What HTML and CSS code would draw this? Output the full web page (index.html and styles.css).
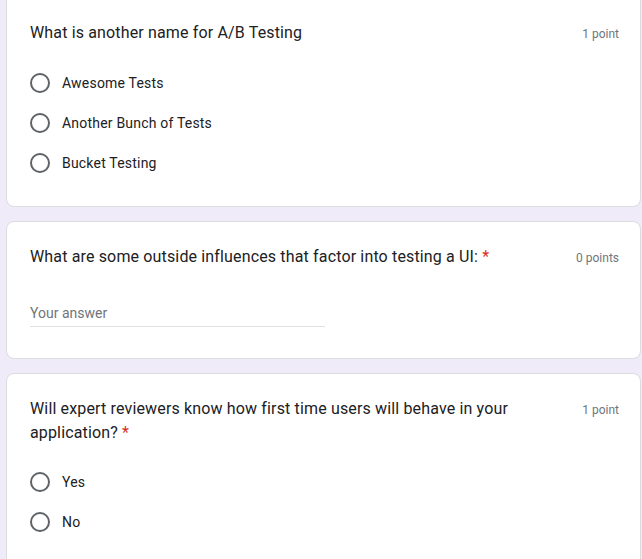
FILE: index.html
```html
<!DOCTYPE html>
<html lang="en">
<head>
<meta charset="utf-8">
<title>Quiz</title>
<link rel="stylesheet" href="styles.css">
</head>
<body>
<main class="stack">
  <section class="card card-first">
    <div class="head">
      <div class="title">What is another name for A/B Testing</div>
      <div class="points">1 point</div>
    </div>
    <div class="options">
      <label class="option"><span class="radio"></span><span class="label">Awesome Tests</span></label>
      <label class="option"><span class="radio"></span><span class="label">Another Bunch of Tests</span></label>
      <label class="option"><span class="radio"></span><span class="label">Bucket Testing</span></label>
    </div>
  </section>

  <section class="card">
    <div class="head">
      <div class="title">What are some outside influences that factor into testing a UI:&nbsp;<span class="req">*</span></div>
      <div class="points">0 points</div>
    </div>
    <div class="answer">Your answer</div>
  </section>

  <section class="card">
    <div class="head">
      <div class="title">Will expert reviewers know how first time users will behave in your application?&nbsp;<span class="req">*</span></div>
      <div class="points">1 point</div>
    </div>
    <div class="options">
      <label class="option"><span class="radio"></span><span class="label">Yes</span></label>
      <label class="option"><span class="radio"></span><span class="label">No</span></label>
    </div>
  </section>
</main>
</body>
</html>
```

FILE: styles.css
```css
* { box-sizing: border-box; }
html, body {
  margin: 0;
  padding: 0;
  background: #f0ebf8;
  font-family: Roboto, "Liberation Sans", Arial, sans-serif;
  color: #202124;
  overflow: hidden;
}
.stack {
  display: flex;
  flex-direction: column;
  gap: 14px;
  padding-left: 6px;
  width: 641px;
}
.card {
  background: #fff;
  border: 1px solid #dadce0;
  border-radius: 8px;
  padding: 23px 21px 31px 23px;
}
.card-first {
  margin-top: -3px;
  border-top-left-radius: 0;
  border-top-right-radius: 0;
  padding-top: 23px;
  padding-bottom: 23px;
}
.head {
  display: flex;
  align-items: baseline;
  justify-content: space-between;
}
.title {
  width: 525px;
  font-size: 16px;
  line-height: 24px;
  letter-spacing: 0.15px;
  color: #202124;
}
.req { color: #d93025; }
.points {
  font-size: 12px;
  line-height: 24px;
  color: #70757a;
  white-space: nowrap;
}
.options {
  display: flex;
  flex-direction: column;
  margin-top: 17px;
}
.option {
  display: flex;
  align-items: center;
  height: 40px;
  gap: 12px;
}
.radio {
  width: 20px;
  height: 20px;
  border: 2px solid #5f6368;
  border-radius: 50%;
  flex: none;
}
.label {
  font-size: 14px;
  letter-spacing: 0.2px;
  color: #202124;
}
.answer {
  margin-top: 33px;
  width: 295px;
  font-size: 14px;
  line-height: 20px;
  padding-bottom: 3px;
  color: #70757a;
  border-bottom: 1px solid #e0e0e0;
}
```
